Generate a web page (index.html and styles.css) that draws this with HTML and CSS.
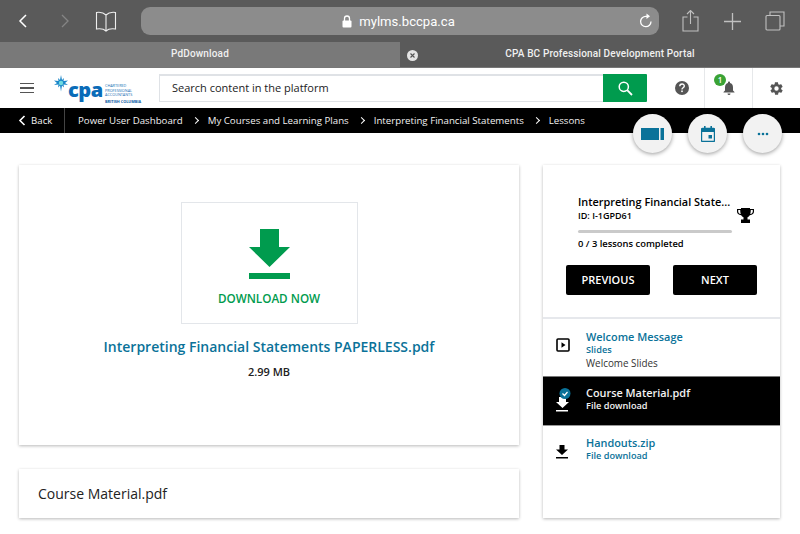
FILE: index.html
```html
<!DOCTYPE html>
<html lang="en">
<head>
  <meta charset="UTF-8">
  <title>PdDownload</title>
  <link rel="stylesheet" href="styles.css">
</head>
<body>

<div class="toolbar">
  <svg class="tool-icon back" width="14" height="18" viewBox="0 0 14 18"><path d="M10 3 4 9l6 6" fill="none" stroke="#fff" stroke-width="1.500"/></svg>
  <svg class="tool-icon forward" width="14" height="18" viewBox="0 0 14 18"><path d="M3 3l6 6-6 6" fill="none" stroke="#858585" stroke-width="1.300"/></svg>
  <svg class="tool-icon book" width="22" height="21" viewBox="0 0 22 21"><path d="M11 4C9 2 5 1 1.500 1.500V18C5 17.500 9 18 11 20c2-2 6-2.500 9.500-2V1.500C17 1 13 2 11 4Zm0 0v16" fill="none" stroke="#eee" stroke-width="1.100"/></svg>
  <div class="address">
    <svg class="lock" width="10" height="13" viewBox="0 0 10 13"><path d="M2.500 6V3.500a2.500 2.500 0 0 1 5 0V6" fill="none" stroke="#fff" stroke-width="1.300"/><rect x="0.500" y="5.500" width="9" height="7" rx="1" fill="#fff"/></svg>
    <span>mylms.bccpa.ca</span>
    <svg class="reload" width="14" height="15" viewBox="0 0 14 15"><path d="M12 8.500A5.200 5.200 0 1 1 7 3.300h2" fill="none" stroke="#fff" stroke-width="1.300"/><path d="M7.500 0.500 11 3.300 7.500 6Z" fill="#fff"/></svg>
  </div>
  <div class="tool-right">
    <svg width="17" height="22" viewBox="0 0 17 22"><path d="M5.500 7H1v14h15V7h-4.500M8.500 14V1M5 4l3.500-3.500L12 4" fill="none" stroke="#c0c0c0" stroke-width="1.100"/></svg>
    <svg width="17" height="17" viewBox="0 0 17 17"><path d="M8.500 0v17M0 8.500h17" stroke="#c0c0c0" stroke-width="1.300"/></svg>
    <svg width="20" height="20" viewBox="0 0 20 20"><path d="M5 4V1h14v14h-4" fill="none" stroke="#c0c0c0" stroke-width="1.100"/><rect x="1" y="4.500" width="14" height="14.500" rx="1" fill="none" stroke="#c0c0c0" stroke-width="1.100"/></svg>
  </div>
</div>

<div class="tabs">
  <div class="tab tab-active">PdDownload</div>
  <div class="tab">
    <svg class="tab-close" width="11" height="11" viewBox="0 0 11 11"><circle cx="5.500" cy="5.500" r="5.500" fill="#e4e4e4"/><path d="M3.500 3.500l4 4m0-4-4 4" stroke="#555" stroke-width="1.100"/></svg>
    CPA BC Professional Development Portal
  </div>
</div>

<div class="header">
  <div class="burger"><i></i><i></i><i></i></div>
  <div class="logo">
    <svg class="leaf" width="14" height="17" viewBox="0 0 14 17"><path d="M7 0l1 5 2-2-.5 3 4.500-.5-3 2.500 3 2-4.500-.5.5 3-2-2-1 6-1-6-2 2 .5-3-4.500.5 3-2-3-2.500 4.500.5L4 3l2 2Z" fill="#1b87c9"/><circle cx="7" cy="8" r="2.200" fill="#6fdbe0"/></svg>
    <span class="logo-cpa">cpa</span>
    <div class="logo-text">
      <span>CHARTERED</span>
      <span>PROFESSIONAL</span>
      <span>ACCOUNTANTS</span>
      <b>BRITISH COLUMBIA</b>
    </div>
  </div>
  <div class="search">
    <div class="search-input">Search content in the platform</div>
    <div class="search-btn">
      <svg width="15" height="15" viewBox="0 0 15 15"><circle cx="5.800" cy="5.800" r="4.600" fill="none" stroke="#fff" stroke-width="1.500"/><path d="M9.200 9.200 14 14" stroke="#fff" stroke-width="1.800"/></svg>
    </div>
  </div>
  <div class="head-icon help">
    <svg width="14" height="14" viewBox="0 0 14 14"><circle cx="7" cy="7" r="7" fill="#555"/><path d="M4.800 5.300c0-3 4.500-3 4.500-.3 0 1.700-2.300 1.700-2.300 3.400" fill="none" stroke="#fff" stroke-width="1.400"/><rect x="6.200" y="9.500" width="1.600" height="1.600" fill="#fff"/></svg>
  </div>
  <div class="head-icon bell">
    <span class="badge">1</span>
    <svg width="12" height="14" viewBox="0 0 12 14"><path d="M6 0.500c.6 0 1 .4 1 1v.6C9 2.600 10 4.300 10 6.500V9.500l1.500 1.500v.5H.5V11L2 9.500v-3C2 4.300 3 2.600 5 2.100v-.6c0-.6.400-1 1-1ZM4.500 12.500h3A1.500 1.500 0 0 1 4.500 12.500Z" fill="#555"/></svg>
  </div>
  <div class="head-icon gear">
    <svg width="15" height="15" viewBox="0 0 24 24"><path d="M19.400 13c0-.3.100-.6.100-1s0-.7-.1-1l2.100-1.600c.2-.1.200-.4.100-.6l-2-3.500c-.1-.2-.4-.3-.6-.2l-2.500 1c-.5-.4-1.100-.7-1.700-1l-.4-2.600c0-.3-.2-.5-.5-.5h-4c-.2 0-.5.200-.5.400l-.4 2.700c-.6.200-1.100.6-1.700 1l-2.500-1c-.2-.1-.5 0-.6.200l-2 3.500c-.1.200 0 .5.100.6L4.600 11c0 .3-.1.600-.1 1s0 .7.100 1l-2.100 1.600c-.2.200-.2.400-.1.600l2 3.500c.1.200.4.300.6.200l2.500-1c.5.400 1.100.7 1.700 1l.4 2.600c0 .3.200.5.500.5h4c.2 0 .5-.2.500-.4l.4-2.700c.6-.2 1.100-.6 1.700-1l2.500 1c.2.1.5 0 .6-.2l2-3.500c.1-.2 0-.5-.1-.6ZM12 15.500a3.500 3.500 0 1 1 0-7 3.500 3.500 0 0 1 0 7Z" fill="#555"/></svg>
  </div>
</div>

<div class="crumbs">
  <div class="crumb-back">
    <svg width="8" height="11" viewBox="0 0 8 11"><path d="M6.500 1 2 5.500l4.500 4.500" fill="none" stroke="#fff" stroke-width="1.600"/></svg>
    Back
  </div>
  <div class="crumb-list">
    <span>Power User Dashboard</span><em></em>
    <span>My Courses and Learning Plans</span><em></em>
    <span>Interpreting Financial Statements</span><em></em>
    <span>Lessons</span>
  </div>
  <div class="fabs">
    <div class="fab">
      <svg width="23" height="12" viewBox="0 0 23 12"><rect width="18" height="12" fill="#0a7299"/><rect x="19.500" width="3.500" height="12" fill="#0a7299"/></svg>
    </div>
    <div class="fab">
      <svg width="14" height="16" viewBox="0 0 14 16"><path d="M1.500 2.500h11a1 1 0 0 1 1 1v11a1 1 0 0 1-1 1h-11a1 1 0 0 1-1-1v-11a1 1 0 0 1 1-1Z" fill="none" stroke="#0a7299" stroke-width="1.400"/><path d="M0.500 2.500h13V6H.5ZM3 0h1.600v3H3ZM9.400 0H11v3H9.400ZM7.500 9H11v3.500H7.500Z" fill="#0a7299"/></svg>
    </div>
    <div class="fab">
      <svg width="12" height="4" viewBox="0 0 12 4"><circle cx="2" cy="2" r="1.300" fill="#0a7299"/><circle cx="6" cy="2" r="1.300" fill="#0a7299"/><circle cx="10" cy="2" r="1.300" fill="#0a7299"/></svg>
    </div>
  </div>
</div>

<div class="page">
  <div class="main-col">
    <div class="card viewer">
      <div class="download-box">
        <svg width="41" height="50" viewBox="0 0 41 50"><path d="M11 0h19v18h11L20.500 38 0 18h11ZM0 44h41v6H0Z" fill="#009b4e"/></svg>
        <div class="download-label">DOWNLOAD NOW</div>
      </div>
      <div class="file-name">Interpreting Financial Statements PAPERLESS.pdf</div>
      <div class="file-size">2.99 MB</div>
    </div>
    <div class="card title-card">Course Material.pdf</div>
  </div>

  <div class="card side">
    <div class="course">
      <div class="course-row">
        <div class="course-info">
          <div class="course-name">Interpreting Financial State...</div>
          <div class="course-id">ID: I-1GPD61</div>
          <div class="progress"></div>
          <div class="course-count">0 / 3 lessons completed</div>
        </div>
        <svg class="trophy" width="17" height="15" viewBox="0 0 17 15"><path d="M4 0h9v1h4v2.500c0 2-1.500 3.500-4.200 3.800-.5 1-1.300 1.700-2.300 2v2.200H13V15H4v-3.500h2.500V9.300c-1-.3-1.800-1-2.300-2C1.500 7 0 5.500 0 3.500V1h4Zm-2.800 2v1.500c0 1.200.9 2.300 2.600 2.600C3.400 5 3.200 3.500 3.200 2Zm14.600 0h-2c0 1.500-.2 3-.6 4.100 1.700-.3 2.600-1.400 2.600-2.600Z" fill="#000"/></svg>
      </div>
      <div class="course-btns">
        <div class="btn">PREVIOUS</div>
        <div class="btn">NEXT</div>
      </div>
    </div>
    <div class="lesson lesson-first">
      <svg class="lesson-icon" width="14" height="14" viewBox="0 0 14 14"><rect x="1" y="1" width="12" height="12" rx="1" fill="none" stroke="#000" stroke-width="1.600"/><path d="M5.500 4.300 9.500 7l-4 2.700Z" fill="#000"/></svg>
      <div>
        <div class="lesson-title">Welcome Message</div>
        <div class="lesson-type">Slides</div>
        <div class="lesson-desc">Welcome Slides</div>
      </div>
    </div>
    <div class="lesson lesson-active">
      <svg class="lesson-icon" width="16" height="24" viewBox="0 0 16 24"><path d="M3 9h7v5h3l-6.500 6L0 14h3ZM0 22h12v1.500H0Z" fill="#fff"/><circle cx="9" cy="5.500" r="5.500" fill="#0a7299"/><path d="M6.500 5.500 8.500 7.500 11.500 4" fill="none" stroke="#fff" stroke-width="1.200"/></svg>
      <div>
        <div class="lesson-title">Course Material.pdf</div>
        <div class="lesson-type">File download</div>
      </div>
    </div>
    <div class="lesson">
      <svg class="lesson-icon" width="12" height="14" viewBox="0 0 12 14"><path d="M3.500 0h5v4.500H12L6 10 0 4.500h3.500ZM0 12h12v1.500H0Z" fill="#000"/></svg>
      <div>
        <div class="lesson-title">Handouts.zip</div>
        <div class="lesson-type">File download</div>
      </div>
    </div>
  </div>
</div>

</body>
</html>
```

FILE: styles.css
```css
* {
  box-sizing: border-box;
}

body {
  font-family: "Open Sans", sans-serif;
  margin: 0;
  width: 800px;
  height: 534px;
  overflow: hidden;
  background-color: #fff;
  color: #000;
}

/* browser chrome */
.toolbar {
  height: 42px;
  background-color: #5a5a5a;
  display: flex;
  align-items: center;
  position: relative;
}

.tool-icon {
  flex: none;
}

.back {
  margin-left: 16px;
}

.forward {
  margin-left: 29px;
}

.book {
  margin-left: 22px;
}

.address {
  flex: none;
  width: 518px;
  height: 28px;
  margin-left: 24px;
  border-radius: 9px;
  background-color: #8c8c8c;
  color: #fff;
  font-family: Roboto, sans-serif;
  font-size: 13.100px;
  display: flex;
  align-items: center;
  justify-content: center;
  position: relative;
}

.lock {
  margin-right: 7px;
  margin-left: -3px;
}

.reload {
  position: absolute;
  right: 6px;
  top: 6px;
}

.tool-right {
  flex: none;
  margin-left: 23px;
  width: 103px;
  display: flex;
  justify-content: space-between;
  align-items: center;
}

.tabs {
  height: 26px;
  display: flex;
  background-color: #5a5a5a;
  border-bottom: 1px solid #777;
  color: #f0f0f0;
  font-family: Roboto, sans-serif;
  font-size: 10px;
  font-weight: 500;
  letter-spacing: 0.15px;
}

.tab {
  flex: 1;
  display: flex;
  align-items: center;
  justify-content: center;
  position: relative;
  padding-bottom: 2px;
}

.tab-active {
  background-color: #797979;
}

.tab-close {
  position: absolute;
  left: 7px;
  top: 8px;
}

/* site header */
.header {
  height: 40px;
  display: flex;
  align-items: center;
  background-color: #fff;
}

.burger {
  width: 14px;
  margin-left: 20px;
  display: flex;
  flex-direction: column;
  gap: 3px;
}

.burger i {
  display: block;
  height: 1.500px;
  background-color: #555;
}

.logo {
  flex: none;
  width: 105px;
  margin-left: 20px;
  height: 30px;
  position: relative;
}

.leaf {
  position: absolute;
  left: 0;
  top: 2px;
}

.logo-cpa {
  position: absolute;
  left: 14px;
  top: 4px;
  font-size: 20px;
  line-height: 26px;
  font-weight: 800;
  letter-spacing: -0.5px;
  color: #0a6cb8;
}

.logo-text {
  position: absolute;
  left: 51px;
  top: 11px;
  display: flex;
  flex-direction: column;
  font-size: 3.800px;
  line-height: 4.500px;
  color: #1b6fb5;
}

.logo-text b {
  margin-top: 2px;
  color: #0a5ca6;
}

.search {
  flex: none;
  width: 488px;
  height: 28px;
  display: flex;
}

.search-input {
  flex: 1;
  border: 1px solid #dfe2e6;
  border-top-width: 2px;
  border-right: 0;
  font-size: 11px;
  line-height: 24px;
  padding-left: 12px;
  color: #222;
}

.search-btn {
  width: 44px;
  background-color: #009b4e;
  display: flex;
  align-items: center;
  justify-content: center;
  border-radius: 0 1px 1px 0;
}

.head-icon {
  flex: none;
  height: 40px;
  display: flex;
  align-items: center;
  justify-content: center;
  position: relative;
}

.help {
  width: 57px;
  padding-left: 12px;
}

.bell {
  width: 48px;
  border-left: 1px solid #e6e8ea;
}

.gear {
  width: 48px;
  border-left: 1px solid #e6e8ea;
}

.badge {
  position: absolute;
  left: 9px;
  top: 6px;
  width: 12px;
  height: 12px;
  border-radius: 50%;
  background-color: #3aa335;
  color: #fff;
  font-size: 8px;
  font-weight: 600;
  line-height: 12px;
  text-align: center;
}

/* breadcrumb bar */
.crumbs {
  height: 25px;
  background-color: #000;
  color: #f2f2f2;
  display: flex;
  align-items: center;
  font-size: 9.700px;
  font-weight: 500;
  position: relative;
}

.crumb-back {
  width: 65px;
  height: 25px;
  border-right: 1px solid #444;
  display: flex;
  align-items: center;
  gap: 5px;
  padding-left: 18px;
}

.crumb-list {
  display: flex;
  align-items: center;
  margin-left: 13px;
}

.crumb-list em {
  width: 5px;
  height: 5px;
  margin: 0 10px;
  border-top: 1px solid #fff;
  border-right: 1px solid #fff;
  transform: rotate(45deg);
}

.fabs {
  position: absolute;
  left: 633px;
  top: 6px;
  display: flex;
  gap: 16px;
}

.fab {
  width: 39px;
  height: 39px;
  border-radius: 50%;
  background-color: #f2f2f2;
  box-shadow: 0 1px 4px rgba(0, 0, 0, 0.4);
  display: flex;
  align-items: center;
  justify-content: center;
}

/* content */
.page {
  display: flex;
  gap: 24px;
  padding: 32px 20px 0 19px;
  align-items: flex-start;
}

.card {
  background-color: #fff;
  box-shadow: 0 1px 3px rgba(0, 0, 0, 0.28);
}

.main-col {
  width: 500px;
  display: flex;
  flex-direction: column;
  gap: 24px;
}

.viewer {
  height: 280px;
  display: flex;
  flex-direction: column;
  align-items: center;
  padding-top: 37px;
}

.download-box {
  width: 177px;
  height: 122px;
  border: 1px solid #e3e6ea;
  display: flex;
  flex-direction: column;
  align-items: center;
  padding-top: 26px;
}

.download-label {
  margin-top: 11px;
  color: #009b4e;
  font-size: 11.700px;
  font-weight: 600;
}

.file-name {
  margin-top: 13px;
  color: #0a7299;
  font-size: 14px;
  font-weight: 600;
  line-height: 20px;
}

.file-size {
  margin-top: 7px;
  font-size: 11px;
  font-weight: 600;
  color: #222;
}

.title-card {
  height: 49px;
  line-height: 49px;
  padding-left: 19px;
  font-size: 14px;
  color: #222;
}

.side {
  width: 237px;
  height: 353px;
}

.course {
  height: 154px;
  border-bottom: 2px solid #e6e8ec;
  padding: 30px 23px 0;
}

.course-row {
  display: flex;
  align-items: center;
  padding-left: 12px;
}

.course-name {
  font-size: 10.900px;
  font-weight: 600;
  line-height: 14px;
  white-space: nowrap;
}

.course-id {
  font-size: 9px;
  font-weight: 600;
  line-height: 14px;
}

.progress {
  width: 154px;
  height: 3px;
  margin-top: 7px;
  border-radius: 2px;
  background-color: #cacaca;
}

.course-count {
  margin-top: 4px;
  font-size: 9.400px;
  font-weight: 600;
  line-height: 13px;
}

.trophy {
  margin: 0 0 15px 5px;
}

.course-btns {
  display: flex;
  justify-content: space-between;
  margin-top: 15px;
}

.btn {
  width: 84px;
  height: 30px;
  border-radius: 2px;
  background-color: #000;
  color: #fff;
  font-size: 11px;
  font-weight: 600;
  line-height: 30px;
  text-align: center;
}

.lesson {
  display: flex;
  align-items: center;
  padding: 0 0 4px 43px;
  position: relative;
  height: 50px;
}

.lesson-first {
  height: 57px;
  padding: 4px 0 0 43px;
}

.lesson-icon {
  position: absolute;
  left: 13px;
  top: 19px;
}

.lesson-title {
  color: #0a7299;
  font-size: 10.900px;
  font-weight: 600;
  line-height: 14px;
}

.lesson-type {
  color: #0a7299;
  font-size: 9.200px;
  font-weight: 600;
  line-height: 12px;
}

.lesson-desc {
  color: #333;
  font-size: 9.900px;
  line-height: 14px;
}

.lesson-active {
  background-color: #000;
  border-top: 1px solid #777;
  border-bottom: 1px solid #999;
}

.lesson-active .lesson-title,
.lesson-active .lesson-type {
  color: #f2f2f2;
}

.lesson-active .lesson-icon {
  top: 11px;
}
```
